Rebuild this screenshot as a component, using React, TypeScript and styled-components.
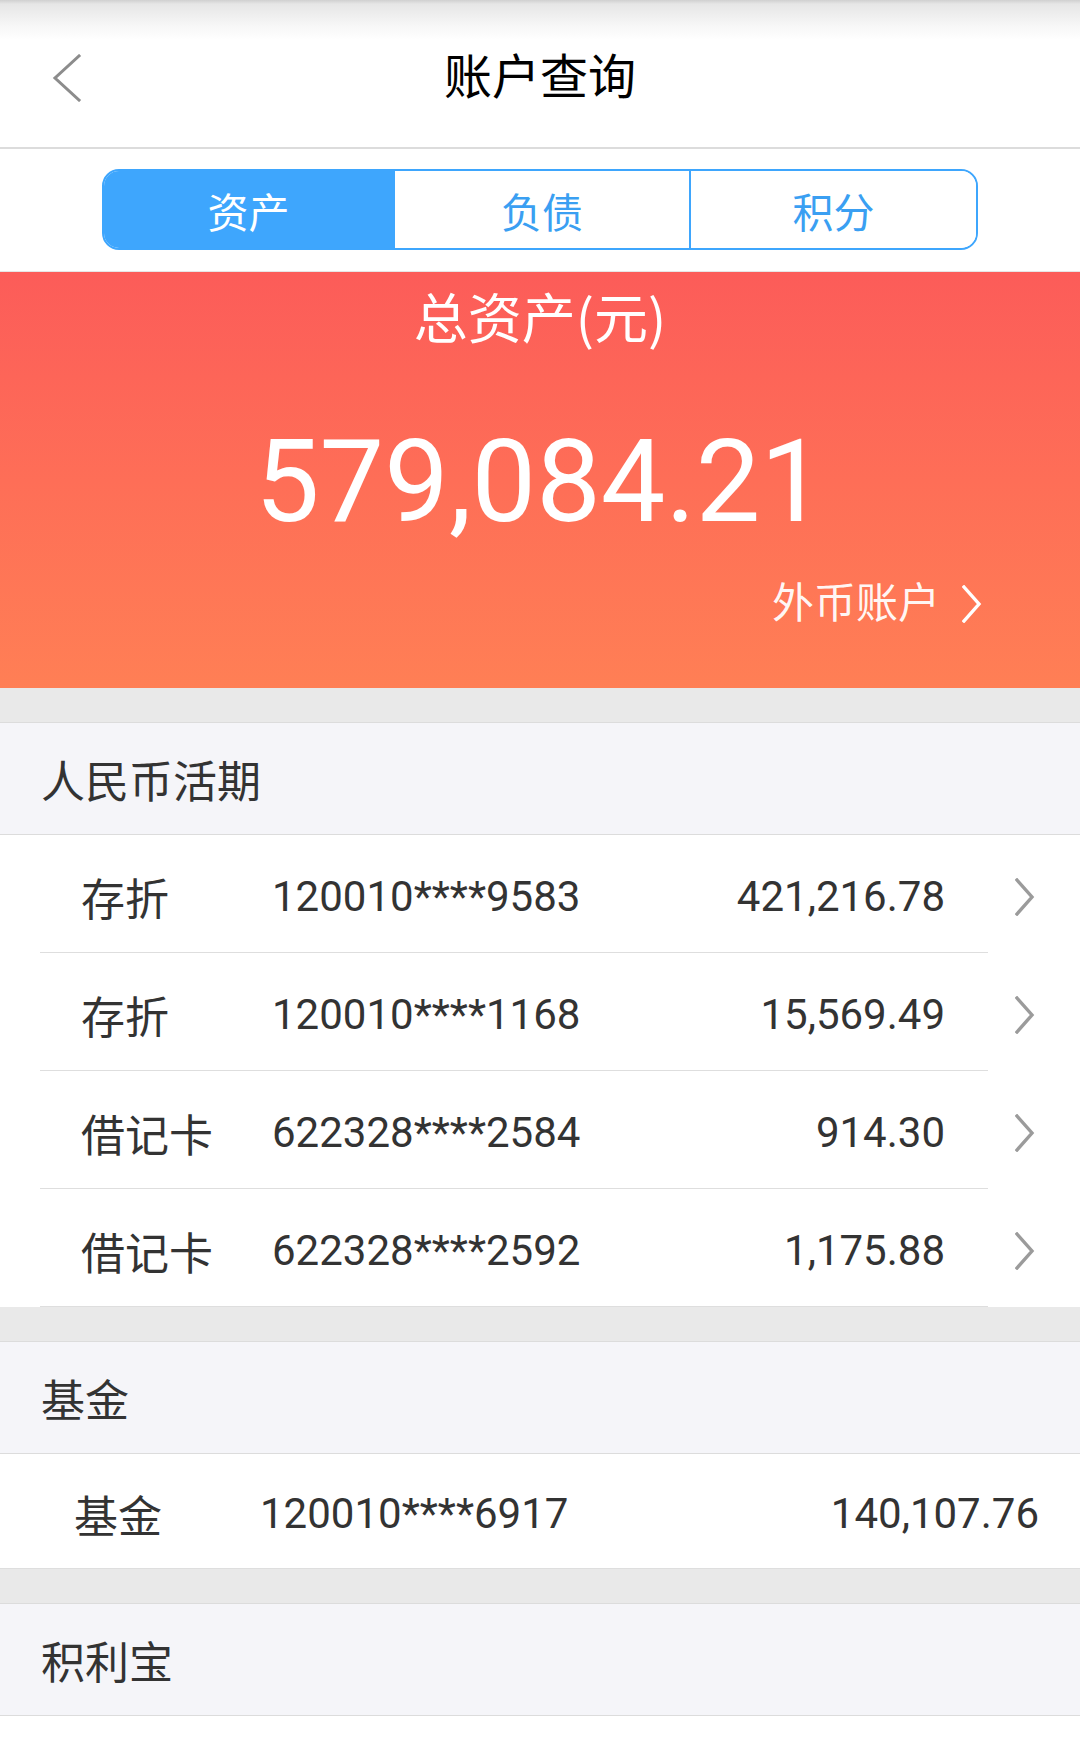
import { FC } from "react";
import styled, { createGlobalStyle } from "styled-components";

const GlobalStyle = createGlobalStyle`
  html, body {
    margin: 0;
    padding: 0;
    background: #fff;
  }
  body {
    font-family: Roboto, "Noto Sans CJK SC", "Noto Sans", sans-serif;
    -webkit-font-smoothing: antialiased;
  }
`;

type account = {
  kind: string;
  no: string;
  amount: string;
};

const rmbAccounts: account[] = [
  { kind: "存折", no: "120010****9583", amount: "421,216.78" },
  { kind: "存折", no: "120010****1168", amount: "15,569.49" },
  { kind: "借记卡", no: "622328****2584", amount: "914.30" },
  { kind: "借记卡", no: "622328****2592", amount: "1,175.88" },
];

const tabs = ["资产", "负债", "积分"];

const Chevron: FC<{ color: string; dir?: "left" | "right"; w?: number; h?: number }> = ({
  color,
  dir = "right",
  w = 20,
  h = 38,
}) => (
  <svg width={w} height={h} viewBox={`0 0 ${w} ${h}`} fill="none">
    {dir === "right" ? (
      <polyline
        points={`2,2 ${w - 3},${h / 2} 2,${h - 2}`}
        stroke={color}
        strokeWidth="3.4"
        strokeLinecap="square"
      />
    ) : (
      <polyline
        points={`${w - 3},2 3,${h / 2} ${w - 3},${h - 2}`}
        stroke={color}
        strokeWidth="3"
        strokeLinecap="square"
      />
    )}
  </svg>
);

export default function App() {
  return (
    <Page>
      <GlobalStyle />
      <NavBar>
        <BackButton>
          <Chevron color="#8c8c8c" dir="left" w={30} h={48} />
        </BackButton>
        <NavTitle>账户查询</NavTitle>
        <span />
      </NavBar>

      <TabArea>
        <Segmented>
          {tabs.map((t, i) => (
            <Segment key={t} $active={i === 0}>
              {t}
            </Segment>
          ))}
        </Segmented>
      </TabArea>

      <Banner>
        <BannerTitle>总资产(元)</BannerTitle>
        <TotalAmount>579,084.21</TotalAmount>
        <ForeignLink>
          <span>外币账户</span>
          <Chevron color="#fff" />
        </ForeignLink>
      </Banner>

      <Gap />
      <SectionHeader>人民币活期</SectionHeader>
      {rmbAccounts.map((a) => (
        <AccountRow key={a.no}>
          <Label>{a.kind}</Label>
          <Number>{a.no}</Number>
          <Amount>{a.amount}</Amount>
          <ArrowCell>
            <Chevron color="#9b9b9b" />
          </ArrowCell>
        </AccountRow>
      ))}

      <Gap />
      <SectionHeader>基金</SectionHeader>
      <FundRow>
        <Label>基金</Label>
        <Number>120010****6917</Number>
        <Amount>140,107.76</Amount>
      </FundRow>

      <Gap />
      <SectionHeader>积利宝</SectionHeader>
    </Page>
  );
}

const Page = styled.div`
  width: 1080px;
  min-height: 1740px;
  background: #fff;
`;

const NavBar = styled.header`
  height: 149px;
  box-sizing: border-box;
  padding-top: 8px;
  border-bottom: 2px solid #dcdcdc;
  background: linear-gradient(
    to bottom,
    #d0d0d0 0px,
    #e6e6e6 4px,
    #f7f7f7 26px,
    #ffffff 40px
  );
  display: grid;
  grid-template-columns: 1fr auto 1fr;
  align-items: center;
`;

const BackButton = styled.div`
  padding-left: 52px;
  display: flex;
  align-items: center;
`;

const NavTitle = styled.h1`
  margin: 0;
  font-size: 48px;
  line-height: 48px;
  font-weight: 400;
  color: #000;
`;

const TabArea = styled.div`
  box-sizing: border-box;
  height: 123px;
  padding: 20px 102px 0;
  border-bottom: 1px solid #e6e6e6;
`;

const Segmented = styled.div`
  height: 81px;
  box-sizing: border-box;
  display: grid;
  grid-template-columns: 289px 296px 1fr;
  border: 2px solid #3ea6fd;
  border-radius: 17px;
  overflow: hidden;
`;

const Segment = styled.div<{ $active?: boolean }>`
  display: flex;
  align-items: center;
  justify-content: center;
  font-size: 41px;
  background: ${(p) => (p.$active ? "#3ea6fd" : "#fff")};
  color: ${(p) => (p.$active ? "#fff" : "#3a9ff2")};
  & + & {
    border-left: 2px solid #3ea6fd;
  }
`;

const Banner = styled.section`
  height: 416px;
  box-sizing: border-box;
  padding-top: 17px;
  background: linear-gradient(to bottom, #fc5c59 0%, #fe6e57 50%, #ff7f55 100%);
  color: #fff;
  display: flex;
  flex-direction: column;
  align-items: center;
`;

const BannerTitle = styled.div`
  font-family: "Noto Sans CJK SC", sans-serif;
  font-size: 54px;
  line-height: 54px;
`;

const TotalAmount = styled.div`
  margin-top: 81px;
  font-size: 115px;
  line-height: 115px;
`;

const ForeignLink = styled.div`
  align-self: flex-end;
  margin-top: 44px;
  margin-right: 98px;
  display: flex;
  align-items: center;
  gap: 22px;
  font-size: 42px;
  line-height: 42px;
  color: rgba(255, 255, 255, 0.95);
`;

const Gap = styled.div`
  height: 34px;
  background: #e9e9e9;
`;

const SectionHeader = styled.div`
  height: 113px;
  display: flex;
  align-items: center;
  padding-left: 41px;
  box-sizing: border-box;
  border-top: 1px solid #dcdcdc;
  border-bottom: 1px solid #dcdcdc;
  background: #f5f5f9;
  font-size: 44px;
  color: #333;
`;

const AccountRow = styled.div`
  position: relative;
  height: 118px;
  box-sizing: border-box;
  padding: 5px 45px 0 81px;
  display: grid;
  grid-template-columns: 191px 1fr auto 90px;
  align-items: center;
  color: #333;
  &::after {
    content: "";
    position: absolute;
    left: 40px;
    right: 92px;
    bottom: 0;
    height: 1px;
    background: #dedede;
  }
`;

const FundRow = styled.div`
  height: 115px;
  box-sizing: border-box;
  padding: 5px 41px 0 74px;
  display: grid;
  grid-template-columns: 186px 1fr auto;
  align-items: center;
  color: #333;
  border-bottom: 1px solid #dedede;
`;

const Label = styled.span`
  font-size: 44px;
`;

const Number = styled.span`
  font-size: 42px;
`;

const Amount = styled.span`
  font-size: 42px;
  text-align: right;
`;

const ArrowCell = styled.span`
  display: flex;
  justify-content: flex-end;
  align-items: center;
`;
